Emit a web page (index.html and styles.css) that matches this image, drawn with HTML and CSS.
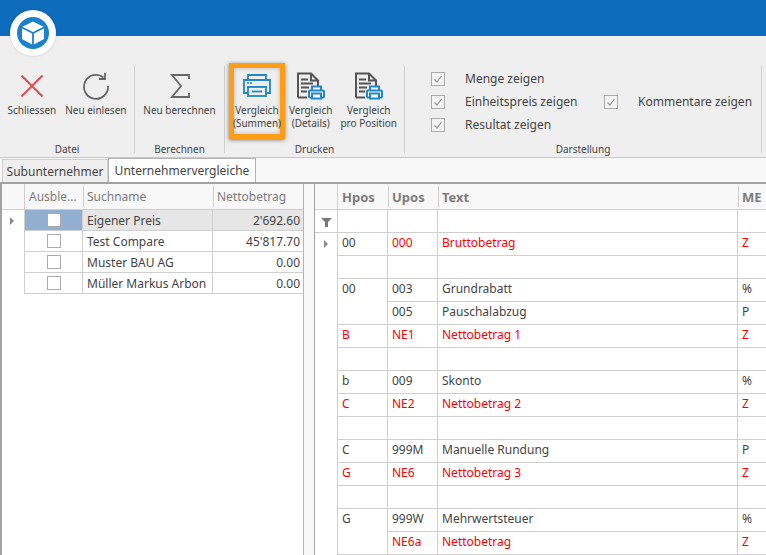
FILE: index.html
```html
<!DOCTYPE html>
<html lang="de">
<head>
    <meta charset="UTF-8">
    <title>Unternehmervergleiche</title>
    <link rel="stylesheet" href="styles.css">
</head>
<body>

    <svg class="defs" width="0" height="0">
        <symbol id="docPrint" viewBox="0 0 28 27">
            <path d="M1 25V1h13l7 7v6" fill="none" stroke="#555" stroke-width="2"/>
            <path d="M14 1v7h7" fill="none" stroke="#555" stroke-width="2"/>
            <path d="M4 7h7M4 11h12M4 15h8M4 19h6" stroke="#555" stroke-width="2"/>
            <path d="M1 25h9" stroke="#555" stroke-width="2"/>
            <path d="M15 18v-4h9v4" fill="#fff" stroke="#1e88c9" stroke-width="2"/>
            <rect x="12" y="18" width="15" height="7" rx="1" fill="#fff" stroke="#1e88c9" stroke-width="2"/>
            <rect x="15" y="21" width="9" height="5" fill="#fff" stroke="#1e88c9" stroke-width="2"/>
        </symbol>
        <symbol id="check" viewBox="0 0 12 12">
            <path d="M2.500 6.500 5 9l4.500-6" fill="none" stroke="#999" stroke-width="1.200"/>
        </symbol>
    </svg>

    <div id="titlebar"></div>
    <div class="logo">
        <svg width="32" height="32" viewBox="0 0 32 32">
            <circle cx="16" cy="16" r="16" fill="#1a82cc"/>
            <path d="M16 4.500 27 10v12l-11 6-11-6V10z" fill="#fff"/>
            <path d="M5 10.500 16 16l11-5.500M16 16v12" fill="none" stroke="#1a82cc" stroke-width="1.800"/>
        </svg>
    </div>

    <div id="ribbon">
        <div class="group group-datei">
            <div class="buttons">
                <div class="rb">
                    <svg class="icon" width="28" height="28" viewBox="0 0 28 28">
                        <path d="M3.500 3.500 24.500 24.500M24.500 3.500 3.500 24.500" stroke="#e9444c" stroke-width="1.800"/>
                    </svg>
                    <span>Schliessen</span>
                </div>
                <div class="rb">
                    <svg class="icon" width="28" height="28" viewBox="0 0 28 28">
                        <path d="M21.500 5.500A12 12 0 1 0 26 14" fill="none" stroke="#666" stroke-width="1.800"/>
                        <path d="M23 1v6h-6" fill="none" stroke="#666" stroke-width="1.800"/>
                    </svg>
                    <span>Neu einlesen</span>
                </div>
            </div>
            <div class="group-label">Datei</div>
        </div>

        <div class="group group-berechnen">
            <div class="buttons">
                <div class="rb">
                    <svg class="icon" width="28" height="28" viewBox="0 0 28 28">
                        <path d="M23 7V3H6l9 11-9 11h17v-4" fill="none" stroke="#666" stroke-width="1.800"/>
                    </svg>
                    <span>Neu berechnen</span>
                </div>
            </div>
            <div class="group-label">Berechnen</div>
        </div>

        <div class="group group-drucken">
            <div class="buttons">
                <div class="rb rb-marked">
                    <svg class="icon" width="28" height="28" viewBox="0 -1 28 28">
                        <path d="M5 7V2h18v5" fill="none" stroke="#1e88c9" stroke-width="1.800"/>
                        <path d="M5 20H1V7h26v13h-4" fill="none" stroke="#1e88c9" stroke-width="1.800"/>
                        <path d="M4 14h20" stroke="#1e88c9" stroke-width="1.800"/>
                        <rect x="5" y="14" width="18" height="9" fill="#efefef" stroke="#1e88c9" stroke-width="1.800"/>
                        <path d="M9 18.500h10" stroke="#1e88c9" stroke-width="1.800"/>
                        <path d="M4 10h2M7 10h2" stroke="#1e88c9" stroke-width="1.500"/>
                    </svg>
                    <span>Vergleich<br>(Summen)</span>
                </div>
                <div class="rb">
                    <svg class="icon" width="28" height="28"><use href="#docPrint"/></svg>
                    <span>Vergleich<br>(Details)</span>
                </div>
                <div class="rb">
                    <svg class="icon" width="28" height="28"><use href="#docPrint"/></svg>
                    <span>Vergleich<br>pro Position</span>
                </div>
            </div>
            <div class="group-label">Drucken</div>
        </div>

        <div class="group group-darstellung">
            <div class="options">
                <div class="opt"><svg class="tick" width="14" height="14"><use href="#check"/></svg>Menge zeigen</div>
                <div></div>
                <div class="opt"><svg class="tick" width="14" height="14"><use href="#check"/></svg>Einheitspreis zeigen</div>
                <div class="opt"><svg class="tick" width="14" height="14"><use href="#check"/></svg>Kommentare zeigen</div>
                <div class="opt"><svg class="tick" width="14" height="14"><use href="#check"/></svg>Resultat zeigen</div>
            </div>
            <div class="group-label">Darstellung</div>
        </div>
    </div>

    <div id="tabs">
        <div class="tab">Subunternehmer</div>
        <div class="tab active">Unternehmervergleiche</div>
    </div>

    <div id="main">
        <div id="leftGrid">
            <table class="grid grid-left">
                <colgroup>
                    <col class="c-ind-left"><col class="c-hide"><col class="c-name"><col class="c-net">
                </colgroup>
                <tr class="head">
                    <th class="ind"></th><th class="first">Ausble...</th><th class="sep">Suchname</th><th class="sep">Nettobetrag</th>
                </tr>
                <tr class="selected">
                    <td class="ind"><span class="arrow"></span></td>
                    <td class="hide"><span class="box"></span></td>
                    <td>Eigener Preis</td>
                    <td class="num">2'692.60</td>
                </tr>
                <tr>
                    <td class="ind"></td>
                    <td class="hide"><span class="box"></span></td>
                    <td>Test Compare</td>
                    <td class="num">45'817.70</td>
                </tr>
                <tr>
                    <td class="ind"></td>
                    <td class="hide"><span class="box"></span></td>
                    <td>Muster BAU AG</td>
                    <td class="num">0.00</td>
                </tr>
                <tr>
                    <td class="ind"></td>
                    <td class="hide"><span class="box"></span></td>
                    <td>Müller Markus Arbon</td>
                    <td class="num">0.00</td>
                </tr>
            </table>
        </div>

        <div id="splitter"></div>

        <div id="rightGrid">
            <table class="grid grid-right">
                <colgroup>
                    <col class="c-ind"><col class="c-pos"><col class="c-pos"><col class="c-text"><col class="c-me">
                </colgroup>
                <tr class="head">
                    <th class="ind"></th><th class="first">Hpos</th><th class="sep">Upos</th><th class="sep">Text</th><th class="sep">ME</th>
                </tr>
                <tr>
                    <td class="ind filter">
                        <svg width="11" height="9" viewBox="0 0 11 9"><path d="M0 0h11L7 4v5H4V4z" fill="#777"/></svg>
                    </td>
                    <td></td><td></td><td></td><td></td>
                </tr>
                <tr>
                    <td class="ind" rowspan="14"><span class="arrow"></span></td>
                    <td>00</td><td class="red">000</td><td class="red">Bruttobetrag</td><td class="red">Z</td>
                </tr>
                <tr><td></td><td></td><td></td><td></td></tr>
                <tr><td rowspan="2">00</td><td>003</td><td>Grundrabatt</td><td>%</td></tr>
                <tr><td>005</td><td>Pauschalabzug</td><td>P</td></tr>
                <tr class="red"><td>B</td><td>NE1</td><td>Nettobetrag 1</td><td>Z</td></tr>
                <tr><td></td><td></td><td></td><td></td></tr>
                <tr><td>b</td><td>009</td><td>Skonto</td><td>%</td></tr>
                <tr class="red"><td>C</td><td>NE2</td><td>Nettobetrag 2</td><td>Z</td></tr>
                <tr><td></td><td></td><td></td><td></td></tr>
                <tr><td>C</td><td>999M</td><td>Manuelle Rundung</td><td>P</td></tr>
                <tr class="red"><td>G</td><td>NE6</td><td>Nettobetrag 3</td><td>Z</td></tr>
                <tr><td></td><td></td><td></td><td></td></tr>
                <tr><td rowspan="2">G</td><td>999W</td><td>Mehrwertsteuer</td><td>%</td></tr>
                <tr class="red"><td>NE6a</td><td>Nettobetrag</td><td>Z</td></tr>
            </table>
        </div>
    </div>

</body>
</html>
```

FILE: styles.css
```css
body {
    margin: 0;
    padding: 0;
    width: 766px;
    height: 555px;
    overflow: hidden;
    display: flex;
    flex-direction: column;
    position: relative;
    font-family: 'Noto Sans', sans-serif;
    font-size: 12px;
    color: #444;
    background-color: #efefef;
}

.defs {
    position: absolute;
}

#titlebar {
    height: 36px;
    flex-shrink: 0;
    background-color: #0e6cbc;
}

.logo {
    position: absolute;
    left: 10px;
    top: 10px;
    width: 46px;
    height: 46px;
    border-radius: 50%;
    background-color: #ffffff;
    box-shadow: 0 0 3px rgba(0, 0, 0, 0.15);
    display: flex;
    justify-content: center;
    align-items: center;
}

/* ribbon */
#ribbon {
    height: 122px;
    flex-shrink: 0;
    box-sizing: border-box;
    display: flex;
    padding-top: 30px;
    background-color: #efefef;
    border-bottom: 1px solid #c8c8c8;
}

.group {
    height: 87px;
    box-sizing: border-box;
    display: flex;
    flex-direction: column;
    justify-content: space-between;
    border-right: 1px solid #cfcfcf;
}

.group-datei { width: 135px; }
.group-berechnen { width: 90px; }
.group-drucken { width: 180px; }
.group-darstellung { width: 357px; }

.buttons {
    display: flex;
    justify-content: center;
    gap: 9px;
    padding-top: 6px;
}

.group-drucken .buttons {
    justify-content: flex-start;
    gap: 4px;
    padding-left: 4px;
}

.group-drucken .rb:last-child {
    margin-left: 4px;
}

.rb {
    display: flex;
    flex-direction: column;
    align-items: center;
    white-space: nowrap;
    font-size: 10px;
    line-height: 13px;
    color: #444;
}

.rb .icon {
    margin-bottom: 4px;
}

.rb-marked {
    box-sizing: border-box;
    width: 56px;
    height: 76px;
    margin-top: -9px;
    margin-bottom: -4px;
    padding-top: 4px;
    border: 5px solid #ff9d16;
    box-shadow: 0 1px 4px rgba(0, 0, 0, 0.5), inset 0 0 4px rgba(0, 0, 0, 0.25);
}

.rb span {
    text-align: center;
}

.group-label {
    text-align: center;
    font-size: 10px;
    line-height: 14px;
    margin-bottom: -3px;
    color: #444;
}

.options {
    display: grid;
    grid-template-columns: 173px auto;
    grid-auto-rows: 23px;
    padding: 1px 0 0 26px;
}

.opt {
    display: flex;
    align-items: center;
    white-space: nowrap;
}

.tick {
    box-sizing: border-box;
    flex-shrink: 0;
    margin-right: 20px;
    border: 1px solid #ababab;
    background-color: #f4f4f4;
}

/* tabs */
#tabs {
    height: 24px;
    flex-shrink: 0;
    box-sizing: border-box;
    display: flex;
    align-items: flex-end;
    padding-left: 2px;
    background-color: #f8f8f8;
}

.tab {
    box-sizing: border-box;
    width: 106px;
    height: 23px;
    line-height: 23px;
    text-align: center;
    background-color: #efefef;
    border: 1px solid #d0d0d0;
    border-bottom: none;
}

.tab.active {
    width: 148px;
    height: 24px;
    background-color: #ffffff;
    border-color: #b4b4b4;
}

/* grids */
#main {
    flex-grow: 1;
    display: flex;
    min-height: 0;
    border-top: 2px solid #a3a3a3;
    background-color: #f8f8f8;
}

#leftGrid {
    width: 304px;
    box-sizing: border-box;
    flex-shrink: 0;
    background-color: #ffffff;
    border-left: 2px solid #a3a3a3;
    border-right: 1px solid #b4b4b4;
}

#splitter {
    width: 10px;
    flex-shrink: 0;
}

#rightGrid {
    flex-grow: 1;
    background-color: #ffffff;
    border-left: 1px solid #a3a3a3;
}

.grid {
    table-layout: fixed;
    border-collapse: separate;
    border-spacing: 0;
}

.grid td, .grid th {
    box-sizing: border-box;
    padding: 0 4px;
    border-right: 1px solid #cfcfcf;
    border-bottom: 1px solid #cfcfcf;
    white-space: nowrap;
    overflow: hidden;
    text-align: left;
    font-weight: normal;
}

.grid-left { width: 301px; }
.grid-right { width: 451px; }

.c-ind-left { width: 23px; }
.c-hide { width: 58px; }
.c-name { width: 130px; }
.c-net { width: 90px; }

.c-ind { width: 23px; }
.c-pos { width: 50px; }
.c-text { width: 300px; }
.c-me { width: 28px; }

.grid tr.head th {
    height: 26px;
    color: #7c7c7c;
    background-color: #f8f8f8;
    background-image: linear-gradient(#cfcfcf, #cfcfcf);
    background-repeat: no-repeat;
    background-size: 0 0;
    border-right: none;
}

.grid tr.head th.sep {
    background-size: 1px 21px;
    background-position: 0 2px;
}

.grid tr.head th.ind {
    border-right: 1px solid #cfcfcf;
}

.grid-right tr.head th {
    font-size: 13px;
    font-weight: bold;
}

.grid-left td {
    height: 21px;
}

.grid-left td:last-child {
    border-right: none;
}

.grid-right td {
    height: 23px;
}

.grid-right tr:nth-child(n+3) td {
    vertical-align: top;
    padding-top: 1px;
    line-height: 17px;
}

.grid-right td:last-child, .grid-right th:last-child {
    border-right: none;
}

.grid-right tr:nth-child(n+3) td.ind {
    padding: 7px 0 0 9px;
}

.grid-right td.filter {
    text-align: center;
    padding: 2px 0 0;
}

.grid td.ind {
    border-bottom: none;
}

.grid td.filter {
    border-bottom: 1px solid #cfcfcf;
}

.grid-left td.ind {
    padding: 0 0 0 8px;
}

.red, .red td {
    color: #ff0000;
}

.num {
    text-align: right !important;
    padding-right: 3px !important;
}

.hide {
    text-align: center !important;
}

.box {
    display: block;
    box-sizing: border-box;
    width: 14px;
    height: 14px;
    margin: 0 auto;
    border: 1px solid #ababab;
    background-color: #ffffff;
}

.arrow {
    display: block;
    width: 0;
    height: 0;
    border-left: 4px solid #8a8a8a;
    border-top: 4px solid transparent;
    border-bottom: 4px solid transparent;
}

.selected td {
    background-color: #e6e6e6;
}

.selected td.ind {
    background-color: #ffffff;
}

.selected td.hide {
    background-color: #93afd0;
}
```
